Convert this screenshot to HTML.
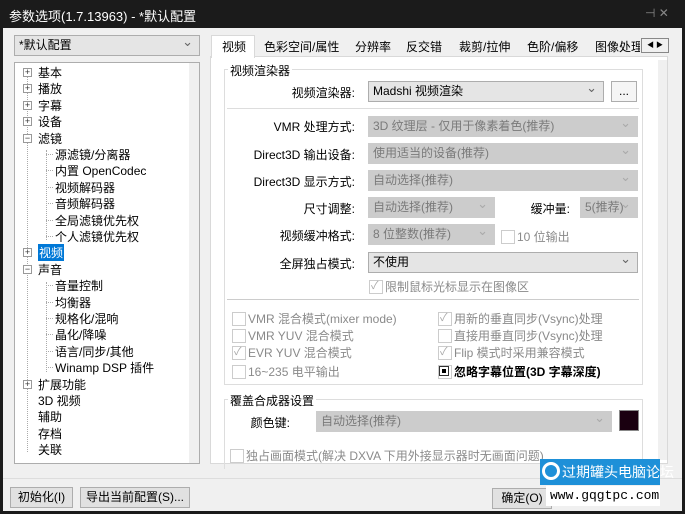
<!DOCTYPE html><html><head><meta charset="utf-8"><style>
*{box-sizing:border-box;margin:0;padding:0}
body{width:685px;height:514px;background:#1b1b1b;font-family:"Liberation Sans","Noto Sans CJK SC",sans-serif;font-size:12px;color:#000;position:relative;overflow:hidden}
.a{position:absolute;white-space:nowrap}
#win{position:absolute;left:3px;top:28px;width:679px;height:483px;background:#f0f0f0}
.combo{position:absolute;border:1px solid #adadad;background:#e5e5e5;height:21px;line-height:19px;padding-left:4px}
.combo.dis{border-color:#ccc;background:#cccccc;color:#7a7a7a}
.combo:after{content:"⌄";position:absolute;right:6px;top:-4px;color:#666;font-size:13px}
.combo.dis:after{color:#aaa}
.lbl{position:absolute;text-align:right;white-space:nowrap}
.cb{position:absolute;white-space:nowrap;color:#8a8a8a;padding-left:16px}
.cb:before{content:"";position:absolute;left:0;top:2px;width:12px;height:12px;border:1px solid #ccc;background:#fff}
.cb.k:after{content:"✓";position:absolute;left:2px;top:-1px;color:#aaa;font-size:11px}
.btn{position:absolute;border:1px solid #adadad;background:#e1e1e1;height:21px;line-height:19px;text-align:center}
.t{position:absolute;white-space:nowrap;font-size:12px}
.pm{position:absolute;width:9px;height:9px;border:1px solid #999;background:#fff;font-size:9px;line-height:7px;text-align:center;color:#333}
</style></head><body>
<div class="a" style="left:9px;top:6px;color:#fff;font-size:13px">参数选项(1.7.13963) - *默认配置</div>
<div class="a" style="left:645px;top:6px;color:#888;font-size:12px">⊣ ✕</div>
<div id="win"></div>
<div class="combo" style="left:14px;top:35px;width:186px;background:#e5e5e5">*默认配置</div>
<div class="a" style="left:14px;top:62px;width:186px;height:402px;background:#fff;border:1px solid #adadad"></div>
<div class="a" style="left:189px;top:63px;width:10px;height:400px;background:#f0f0f0"></div>
<div class="a" style="left:27px;top:77px;height:375px;border-left:1px dotted #aaa"></div>
<div id="tree"></div>
<!-- tabs -->
<div class="a" style="left:210px;top:56px;width:458px;height:408px;background:#fff;border:1px solid #d9d9d9"></div>
<div class="a" style="left:211px;top:35px;width:44px;height:23px;background:#fff;border:1px solid #d9d9d9;border-bottom:none"></div>
<div class="t" style="left:222px;top:38px">视频</div>
<div class="t" style="left:264px;top:38px">色彩空间/属性</div>
<div class="t" style="left:355px;top:38px">分辨率</div>
<div class="t" style="left:406px;top:38px">反交错</div>
<div class="t" style="left:459px;top:38px">裁剪/拉伸</div>
<div class="t" style="left:527px;top:38px">色阶/偏移</div>
<div class="t" style="left:595px;top:38px;width:45px;overflow:hidden">图像处理</div>
<div class="a" style="left:641px;top:38px;width:28px;height:15px;border:1px solid #888;background:#f0f0f0;font-size:7px;line-height:13px;text-align:center">◀ ▶</div>
<div class="a" style="left:658px;top:60px;width:9px;height:400px;background:#f0f0f0"></div>
<!-- group 1 -->
<div class="a" style="left:224px;top:69px;width:419px;height:316px;border:1px solid #ddd"></div>
<div class="t" style="left:228px;top:62px;background:#fff;padding:0 2px">视频渲染器</div>
<div class="lbl" style="right:330px;top:84px">视频渲染器:</div>
<div class="combo" style="left:368px;top:81px;width:236px">Madshi 视频渲染</div>
<div class="btn" style="left:611px;top:81px;width:26px;background:#f5f5f5">...</div>
<div class="a" style="left:227px;top:108px;width:412px;border-top:1px solid #ddd"></div>
<div class="lbl" style="right:330px;top:118px">VMR 处理方式:</div>
<div class="combo dis" style="left:368px;top:116px;width:270px">3D 纹理层 - 仅用于像素着色(推荐)</div>
<div class="lbl" style="right:330px;top:146px">Direct3D 输出设备:</div>
<div class="combo dis" style="left:368px;top:143px;width:270px">使用适当的设备(推荐)</div>
<div class="lbl" style="right:330px;top:173px">Direct3D 显示方式:</div>
<div class="combo dis" style="left:368px;top:170px;width:270px">自动选择(推荐)</div>
<div class="lbl" style="right:330px;top:200px">尺寸调整:</div>
<div class="combo dis" style="left:368px;top:197px;width:127px">自动选择(推荐)</div>
<div class="lbl" style="right:115px;top:200px">缓冲量:</div>
<div class="combo dis" style="left:580px;top:197px;width:58px">5(推荐)</div>
<div class="lbl" style="right:330px;top:227px">视频缓冲格式:</div>
<div class="combo dis" style="left:368px;top:224px;width:127px">8 位整数(推荐)</div>
<div class="cb" style="left:501px;top:228px">10 位输出</div>
<div class="lbl" style="right:330px;top:255px">全屏独占模式:</div>
<div class="combo" style="left:368px;top:252px;width:270px">不使用</div>
<div class="cb k" style="left:369px;top:278px">限制鼠标光标显示在图像区</div>
<div class="a" style="left:227px;top:299px;width:412px;border-top:1px solid #ccc"></div>
<div class="cb" style="left:232px;top:310px">VMR 混合模式(mixer mode)</div>
<div class="cb" style="left:232px;top:327px">VMR YUV 混合模式</div>
<div class="cb k" style="left:232px;top:344px">EVR YUV 混合模式</div>
<div class="cb" style="left:232px;top:363px">16~235 电平输出</div>
<div class="cb k" style="left:438px;top:310px">用新的垂直同步(Vsync)处理</div>
<div class="cb" style="left:438px;top:327px">直接用垂直同步(Vsync)处理</div>
<div class="cb k" style="left:438px;top:344px">Flip 模式时采用兼容模式</div>
<div class="cb" style="left:438px;top:363px;color:#000;font-weight:bold">忽略字幕位置(3D 字幕深度)</div>
<div class="a" style="left:440px;top:367px;width:8px;height:8px;background:#000;border:2px solid #fff;outline:1px solid #333"></div>
<div class="a" style="left:224px;top:399px;width:419px;height:70px;border:1px solid #ddd;border-bottom:none"></div>
<div class="t" style="left:228px;top:392px;background:#fff;padding:0 2px">覆盖合成器设置</div>
<div class="lbl" style="right:395px;top:414px">颜色键:</div>
<div class="combo dis" style="left:316px;top:411px;width:296px">自动选择(推荐)</div>
<div class="a" style="left:619px;top:410px;width:20px;height:21px;border:1px solid #888;background:#1a0010"></div>
<div class="cb" style="left:230px;top:447px">独占画面模式(解决 DXVA 下用外接显示器时无画面问题)</div>
<!-- bottom -->
<div class="a" style="left:3px;top:478px;width:679px;border-top:1px solid #ddd"></div>
<div class="btn" style="left:10px;top:487px;width:63px">初始化(I)</div>
<div class="btn" style="left:80px;top:487px;width:110px">导出当前配置(S)...</div>
<div class="btn" style="left:492px;top:488px;width:60px">确定(O)</div>
<div class="a" style="left:540px;top:459px;width:120px;height:26px;background:#1e90d8;color:#fff;font-size:14px;line-height:26px;padding-left:22px">过期罐头电脑论坛</div>
<div class="a" style="left:542px;top:462px;width:18px;height:18px;border-radius:50%;border:3px solid #fff;background:#1e90d8"></div>
<div class="a" style="left:546px;top:486px;width:114px;height:20px;background:#fff;font-family:'Liberation Mono',monospace;font-size:13px;line-height:20px;padding-left:4px">www.gqgtpc.com</div>
<script>
var items=[["基本",0,"+"],["播放",0,"+"],["字幕",0,"+"],["设备",0,"+"],["滤镜",0,"-"],["源滤镜/分离器",1],["内置 OpenCodec",1],["视频解码器",1],["音频解码器",1],["全局滤镜优先权",1],["个人滤镜优先权",1],["视频",0,"+",1],["声音",0,"-"],["音量控制",1],["均衡器",1],["规格化/混响",1],["晶化/降噪",1],["语言/同步/其他",1],["Winamp DSP 插件",1],["扩展功能",0,"+"],["3D 视频",0],["辅助",0],["存档",0],["关联",0],["配置",0]];
var h="";items.forEach(function(it,i){var y=64+i*16.4;var x=it[1]?55:38;
if(it[2])h+='<div class="pm" style="left:23px;top:'+(y+4)+'px">'+(it[2]=="+"?"+":"−")+'</div>';
if(it[1])h+='<div class="a" style="left:46px;top:'+(y+8)+'px;width:7px;border-top:1px dotted #aaa"></div>';
var st=it[3]?'background:#0078d7;color:#fff;padding:0 1px;':'';
if(y<450)h+='<div class="t" style="left:'+x+'px;top:'+y+'px;'+st+'">'+it[0]+'</div>';});
h+='<div class="a" style="left:46px;top:150px;height:90px;border-left:1px dotted #aaa"></div><div class="a" style="left:46px;top:282px;height:90px;border-left:1px dotted #aaa"></div>';
document.getElementById("tree").innerHTML=h;
</script>
</body></html>
